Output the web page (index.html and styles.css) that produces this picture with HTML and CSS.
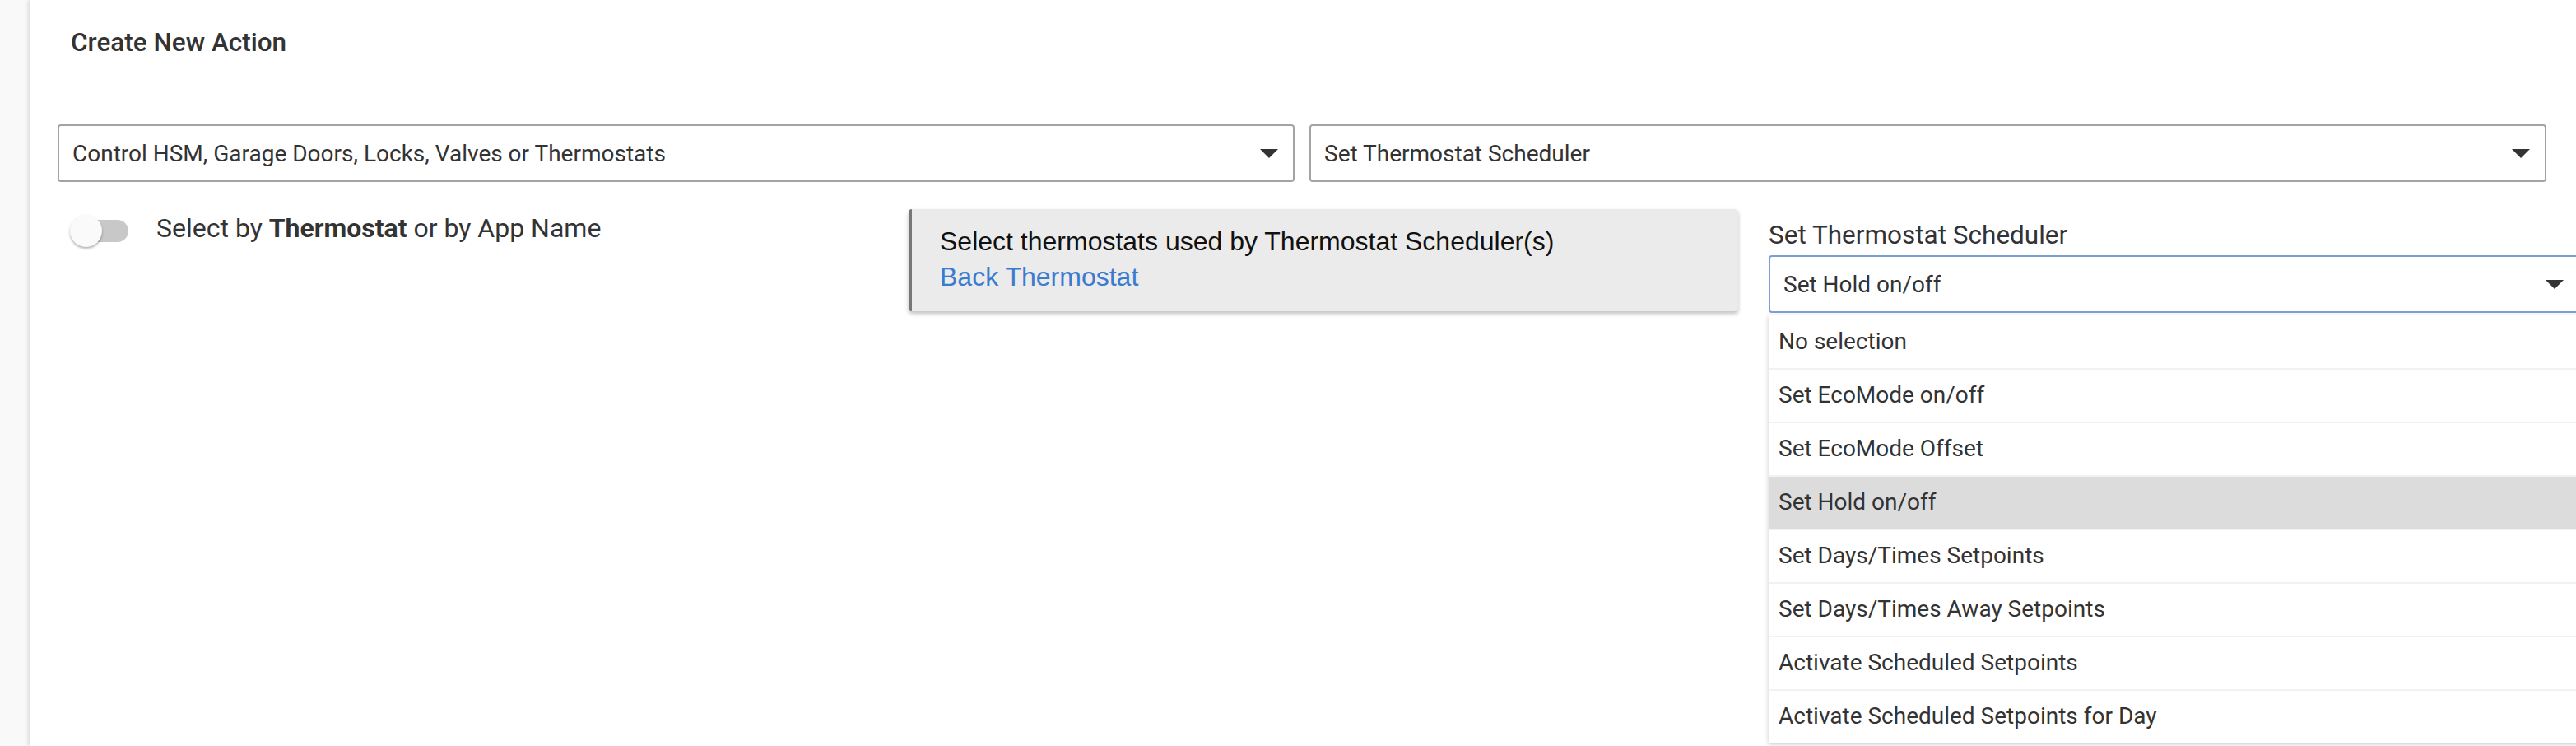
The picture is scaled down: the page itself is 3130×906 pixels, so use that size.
FILE: index.html
```html
<!DOCTYPE html>
<html lang="en">
<head>
    <meta charset="UTF-8">
    <meta name="viewport" content="width=device-width, initial-scale=1.0">
    <title>Create New Action</title>
    <link rel="stylesheet" href="styles.css">
</head>
<body>
<div class="layout">
    <div class="sidebar"></div>

    <div class="main">
        <h2 class="page-title">Create New Action</h2>

        <div class="select-row">
            <div class="select">
                <span>Control HSM, Garage Doors, Locks, Valves or Thermostats</span>
                <span class="caret"></span>
            </div>
            <div class="select">
                <span>Set Thermostat Scheduler</span>
                <span class="caret"></span>
            </div>
        </div>

        <div class="options-row">
            <div class="col-toggle">
                <div class="switch">
                    <div class="switch-track"></div>
                    <div class="switch-thumb"></div>
                </div>
                <div class="switch-label">Select by <b>Thermostat</b> or by App Name</div>
            </div>

            <div class="col-info">
                <div class="info-panel">
                    <div>Select thermostats used by Thermostat Scheduler(s)</div>
                    <a href="#" class="info-link">Back Thermostat</a>
                </div>
            </div>

            <div class="col-action">
                <div class="field-label">Set Thermostat Scheduler</div>
                <div class="select select-open">
                    <span>Set Hold on/off</span>
                    <span class="caret"></span>
                </div>
                <ul class="dropdown">
                    <li>No selection</li>
                    <li>Set EcoMode on/off</li>
                    <li>Set EcoMode Offset</li>
                    <li class="active">Set Hold on/off</li>
                    <li>Set Days/Times Setpoints</li>
                    <li>Set Days/Times Away Setpoints</li>
                    <li>Activate Scheduled Setpoints</li>
                    <li>Activate Scheduled Setpoints for Day</li>
                </ul>
            </div>
        </div>
    </div>
</div>
</body>
</html>
```

FILE: styles.css
```css
html, body {
    margin: 0;
    height: 100%;
    overflow: hidden;
}

body {
    font-family: Roboto, "Liberation Sans", sans-serif;
    color: #333;
    background-color: #fff;
}

.layout {
    display: flex;
    height: 100%;
}

.sidebar {
    width: 36px;
    flex-shrink: 0;
    background-color: #f9f9f9;
}

.main {
    flex: 1;
    min-width: 0;
    background-color: #fff;
    box-shadow: -2px 0 5px rgba(0, 0, 0, 0.12);
    padding: 0 36px 0 34px;
    position: relative;
}

.page-title {
    margin: 0;
    padding: 33px 0 0 16px;
    font-size: 31.5px;
    font-weight: 500;
    line-height: 38px;
    color: #333;
}

/* selects */
.select-row {
    display: flex;
    gap: 18px;
    margin-top: 80px;
}

.select {
    flex: 1;
    height: 70px;
    box-sizing: border-box;
    border: 2px solid #a3a3a3;
    border-radius: 4px;
    display: flex;
    align-items: center;
    justify-content: space-between;
    padding: 0 18px 0 16px;
    font-size: 28px;
    color: #333;
    background-color: #fff;
}

.caret {
    width: 0;
    height: 0;
    border-left: 11px solid transparent;
    border-right: 11px solid transparent;
    border-top: 11px solid #333;
}

/* second row */
.options-row {
    display: flex;
    align-items: flex-start;
    margin-top: 33px;
}

.col-toggle {
    width: 1034px;
    flex-shrink: 0;
    display: flex;
    align-items: flex-start;
    padding-top: 7px;
}

.switch {
    position: relative;
    width: 71px;
    height: 39px;
    margin-left: 15px;
    flex-shrink: 0;
}

.switch-track {
    position: absolute;
    left: 1px;
    top: 6px;
    width: 70px;
    height: 27px;
    border-radius: 14px;
    background-color: #c8c8c8;
}

.switch-thumb {
    position: absolute;
    left: 0;
    top: 0;
    width: 39px;
    height: 39px;
    border-radius: 50%;
    background-color: #fafafa;
    box-shadow: 0 2px 3px rgba(0, 0, 0, 0.3);
}

.switch-label {
    margin-left: 34px;
    font-size: 32px;
    line-height: 33px;
    color: #333;
}

.switch-label b {
    font-weight: 700;
}

.col-info {
    width: 1008px;
    flex-shrink: 0;
}

.info-panel {
    background-color: #ebebeb;
    border-left: 4px solid #777;
    border-radius: 4px;
    box-shadow: 0 3px 5px rgba(0, 0, 0, 0.25);
    padding: 18px 20px 20px 34px;
    font-family: "Liberation Sans", Arial, sans-serif;
    font-size: 32px;
    line-height: 42.86px;
    color: #111;
}

.info-link {
    color: #3a7bd0;
    text-decoration: none;
}

.col-action {
    width: 986px;
    flex-shrink: 0;
    margin-left: 37px;
    padding-top: 11px;
}

.field-label {
    font-size: 31.5px;
    line-height: 42px;
    margin-bottom: 3px;
    color: #333;
}

.select-open {
    border-color: #7d9fd8;
}

.dropdown {
    list-style: none;
    margin: 2px 0 0;
    padding: 0;
    background-color: #fff;
    border-left: 1px solid #e0e0e0;
    box-shadow: 0 2px 6px rgba(0, 0, 0, 0.2);
}

.dropdown li {
    height: 65px;
    box-sizing: border-box;
    border-top: 2px solid #f2f2f2;
    padding: 0 11px 2px;
    display: flex;
    align-items: center;
    font-size: 28px;
    color: #333;
}

.dropdown li:first-child {
    border-top-color: #fff;
}

.dropdown li.active {
    background-color: #dcdcdc;
}
```
